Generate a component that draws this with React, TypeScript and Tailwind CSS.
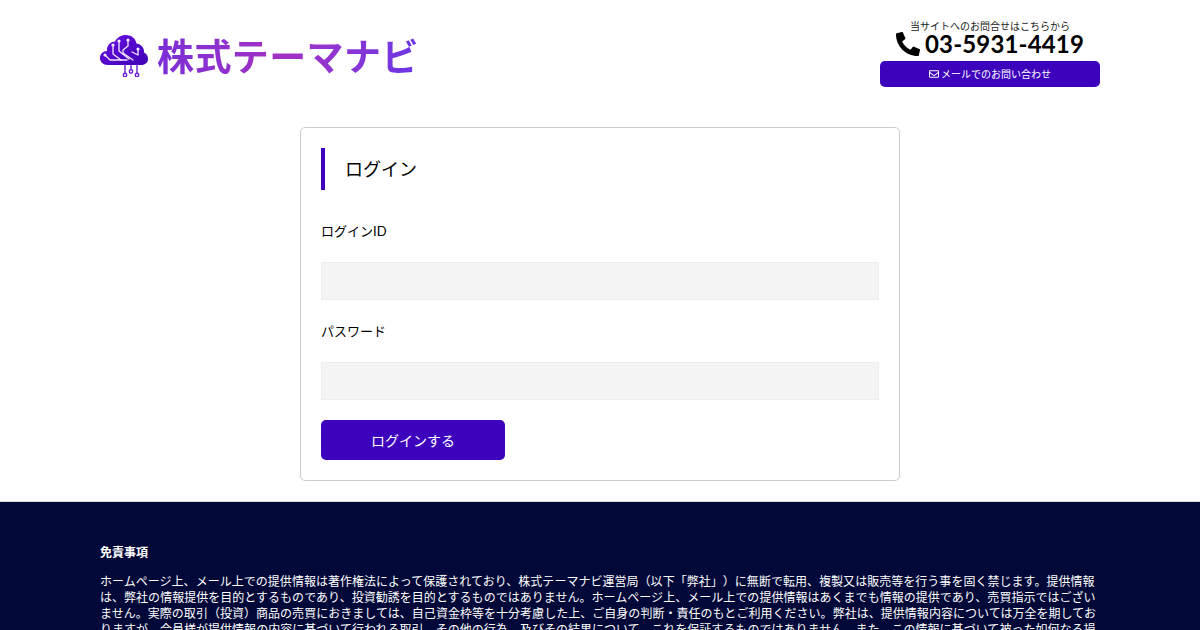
import { FaPhoneAlt, FaRegEnvelope } from 'react-icons/fa';

function BrainLogo() {
  return (
    <svg width="48" height="42" viewBox="0 0 48 42" className="mt-[3px] shrink-0">
      <defs>
        <linearGradient id="cloud" x1="0" y1="0" x2="1" y2="1">
          <stop offset="0" stopColor="#6a10e0" />
          <stop offset="1" stopColor="#3d00b4" />
        </linearGradient>
      </defs>
      {/* cloud */}
      <path
        d="M8 30C3 30 0 27 0 23 0 19 3 16 7 16 6.500 11 10 6.500 15 6.500 17 2.500 21 0 26 0c5.500 0 9.500 3.500 10.500 8.500C41 9 44.500 13 44 17.500 46.500 18.500 48 21 48 24c0 3.500-3 6-6.500 6z"
        fill="url(#cloud)"
      />
      {/* circuit lines */}
      <g fill="none" stroke="#f3e9ff" strokeWidth="1.300" strokeLinecap="round" strokeLinejoin="round">
        <path d="M13 10v9l8 6h6" />
        <path d="M19 6v10l10 8" />
        <path d="M28 5v6l-5 4v3l10 7" />
        <path d="M5 20l5 5h11" />
        <path d="M38 14v6l-6-3" />
      </g>
      <g fill="#f3e9ff">
        <circle cx="13" cy="10" r="1.600" />
        <circle cx="19" cy="6" r="1.600" />
        <circle cx="28" cy="5" r="1.600" />
        <circle cx="5" cy="20" r="1.600" />
        <circle cx="38" cy="14" r="1.600" />
      </g>
      {/* legs */}
      <g fill="none" stroke="#6a1fd0" strokeWidth="1.400">
        <path d="M25 29v10M31 29v6M37 29v10" />
        <circle cx="25" cy="40" r="1.700" fill="#fff" />
        <circle cx="31" cy="36.500" r="1.700" fill="#fff" />
        <circle cx="37" cy="40" r="1.700" fill="#fff" />
      </g>
    </svg>
  );
}

export default function App() {
  return (
    <div className="h-screen overflow-hidden bg-white font-['Lato','Noto_Sans_CJK_JP',sans-serif] text-black [text-spacing-trim:space-all]">
      {/* Header */}
      <header className="mx-auto flex h-[107px] w-[1000px] items-start justify-between">
        <div className="mt-[32px] flex items-center gap-[9px]">
          <BrainLogo />
          <span className="bg-gradient-to-r from-[#7b2fd6] via-[#a42fc4] to-[#6a35e6] bg-clip-text font-['Noto_Sans_CJK_JP',sans-serif] text-[37px] leading-[44px] font-bold tracking-[0.4px] text-transparent">
            株式テーマナビ
          </span>
        </div>

        <div className="mt-[20px] flex w-[220px] flex-col items-center">
          <p className="text-[10px] leading-[12px] text-[#222]">当サイトへのお問合せはこちらから</p>
          <div className="flex h-[24px] items-center gap-[5px]">
            <FaPhoneAlt className="text-[24px]" />
            <span className="text-[24px] leading-[24px] font-bold tracking-[0.15px]">03-5931-4419</span>
          </div>
          <a className="mt-[5px] flex h-[26px] w-full items-center justify-center gap-[2px] rounded-[5px] bg-[#3d02bc] text-[10px] text-white">
            <FaRegEnvelope className="text-[10px]" />
            メールでのお問い合わせ
          </a>
        </div>
      </header>

      {/* Login card */}
      <main className="mt-[20px] flex justify-center">
        <div className="h-[354px] w-[600px] rounded-[5px] border border-[#ccc] px-[20px] pt-[20px]">
          <h1 className="flex h-[42px] items-center border-l-4 border-[#3d02bc] pl-[20px] text-[18px] font-normal">
            ログイン
          </h1>
          <label className="mt-[31px] block text-[13px] leading-[20px]">ログインID</label>
          <input className="mt-[21px] block h-[38px] w-full border border-[#eee] bg-[#f4f4f4]" />
          <label className="mt-[21px] block text-[13px] leading-[20px]">パスワード</label>
          <input type="password" className="mt-[21px] block h-[38px] w-full border border-[#eee] bg-[#f4f4f4]" />
          <button className="mt-[20px] h-[40px] w-[184px] rounded-[5px] bg-[#3d02bc] text-[14px] text-white">
            ログインする
          </button>
        </div>
      </main>

      {/* Footer */}
      <footer className="mt-[20px] border-t border-[#ddd] bg-[#020838] pt-[42px] text-white">
        <div className="mx-auto w-[1000px]">
          <h2 className="text-[12px] leading-[18px] font-bold">免責事項</h2>
          <p className="mt-[12px] text-[12px] leading-[16px] tracking-[0.03px]">
            ホームページ上、メール上での提供情報は著作権法によって保護されており、株式テーマナビ運営局（以下「弊社」）に無断で転用、複製又は販売等を行う事を固く禁じます。提供情報は、弊社の情報提供を目的とするものであり、投資勧誘を目的とするものではありません。ホームページ上、メール上での提供情報はあくまでも情報の提供であり、売買指示ではございません。実際の取引（投資）商品の売買におきましては、自己資金枠等を十分考慮した上、ご自身の判断・責任のもとご利用ください。弊社は、提供情報内容については万全を期しておりますが、会員様が提供情報の内容に基づいて行われる取引、その他の行為、及びその結果について、これを保証するものではありません。また、この情報に基づいて被った如何なる損害についても、弊社は一切の責任を負いかねます。
          </p>
        </div>
      </footer>
    </div>
  );
}
